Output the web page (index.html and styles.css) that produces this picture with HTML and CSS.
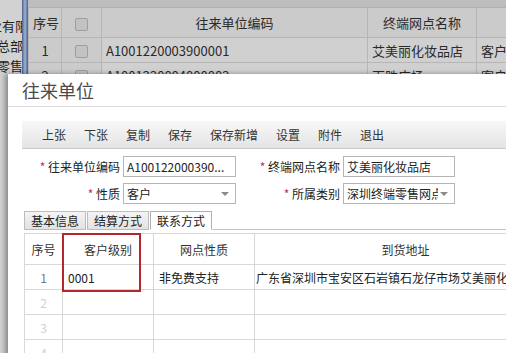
FILE: index.html
```html
<!DOCTYPE html>
<html lang="zh-CN">
<head>
  <meta charset="UTF-8">
  <title>往来单位</title>
  <link rel="stylesheet" href="styles.css">
</head>
<body>
  <div class="backpage">
    <div class="side">
      <div class="side-line"><span>深圳企业有限</span></div>
      <div class="side-line"><span>公司总部</span></div>
      <div class="side-line"><span>终端零售</span></div>
    </div>
    <div class="splitter"></div>
    <div class="list">
      <div class="list-top"></div>
      <table class="list-table">
        <tr class="list-head">
          <td class="c-no">序号</td>
          <td class="c-chk"><span class="chk"></span></td>
          <td class="c-code">往来单位编码</td>
          <td class="c-name">终端网点名称</td>
          <td class="c-type"></td>
        </tr>
        <tr>
          <td class="c-no">1</td>
          <td class="c-chk"><span class="chk"></span></td>
          <td class="left">A1001220003900001</td>
          <td class="left">艾美丽化妆品店</td>
          <td class="left">客户</td>
        </tr>
        <tr>
          <td class="c-no">2</td>
          <td class="c-chk"><span class="chk"></span></td>
          <td class="left">A1001220004000002</td>
          <td class="left">百胜广场</td>
          <td class="left">客户</td>
        </tr>
      </table>
    </div>
  </div>

  <div class="modal">
    <div class="modal-title">往来单位</div>
    <div class="modal-body">
      <div class="toolbar">
        <span class="tool">上张</span>
        <span class="tool">下张</span>
        <span class="tool">复制</span>
        <span class="tool">保存</span>
        <span class="tool">保存新增</span>
        <span class="tool">设置</span>
        <span class="tool">附件</span>
        <span class="tool">退出</span>
      </div>

      <div class="form">
        <label class="lbl"><i>*</i> 往来单位编码</label>
        <div class="field">A100122000390...</div>
        <label class="lbl"><i>*</i> 终端网点名称</label>
        <div class="field">艾美丽化妆品店</div>

        <label class="lbl"><i>*</i> 性质</label>
        <div class="field select">客户<span class="arrow"></span></div>
        <label class="lbl"><i>*</i> 所属类别</label>
        <div class="field select"><span class="clip">深圳终端零售网点</span><span class="arrow"></span></div>
      </div>

      <div class="tabs">
        <span class="tab">基本信息</span>
        <span class="tab">结算方式</span>
        <span class="tab active">联系方式</span>
        <span class="tab-rest"></span>
      </div>

      <div class="grid-wrap">
        <table class="grid">
          <tr class="grid-head">
            <td class="g-no">序号</td>
            <td class="g-level">客户级别</td>
            <td class="g-kind">网点性质</td>
            <td class="g-addr">到货地址</td>
          </tr>
          <tr>
            <td class="g-no first">1</td>
            <td>0001</td>
            <td>非免费支持</td>
            <td class="addr">广东省深圳市宝安区石岩镇石龙仔市场艾美丽化妆品店</td>
          </tr>
          <tr><td class="g-no">2</td><td></td><td></td><td></td></tr>
          <tr><td class="g-no">3</td><td></td><td></td><td></td></tr>
          <tr><td class="g-no">4</td><td></td><td></td><td></td></tr>
        </table>
        <div class="mark"></div>
      </div>
    </div>
  </div>
</body>
</html>
```

FILE: styles.css
```css
html, body {
  margin: 0;
  width: 506px;
  height: 353px;
  overflow: hidden;
}
body {
  position: relative;
  font-family: "Noto Sans CJK SC", "Liberation Sans", sans-serif;
  font-size: 12px;
  color: #333;
  background-color: #c4c4c4;
}

/* page behind the dialog, dimmed */
.backpage {
  display: flex;
  height: 353px;
  background-color: #cdcdcd;
}
.side {
  flex: 0 0 22px;
  padding-top: 16px;
  overflow: hidden;
  background-color: #d2d2d2;
}
.side-line {
  display: flex;
  justify-content: flex-end;
  height: 20px;
  font-size: 13px;
  line-height: 20px;
  color: #222;
  white-space: nowrap;
}
.side-line span {
  flex-shrink: 0;
  margin-right: -1px;
}
.side-line:first-child span {
  margin-right: -6px;
}
.splitter {
  flex: 0 0 6px;
  background: linear-gradient(to right, #4a5f85, #8fa4c8 40%, #8fa4c8 60%, #4a5f85);
}
.list {
  flex: 1;
  min-width: 0;
  overflow: hidden;
}
.list-top {
  height: 7px;
  background-color: #bdbdbd;
  border-bottom: 1px solid #b0b0b0;
}
.list-table {
  border-collapse: collapse;
  table-layout: fixed;
  width: 560px;
  font-size: 13px;
  color: #2a2a2a;
}
.list-table td {
  height: 24px;
  border: 1px solid #b6b6b6;
  border-top: none;
  padding: 0 4px;
  white-space: nowrap;
  overflow: hidden;
}
.list-table .list-head td {
  height: 29px;
  text-align: center;
  background-color: #cbcbcb;
}
.list-table td.left {
  background-color: #d0d0d0;
}
.c-no {
  width: 24px;
  text-align: center;
  background-color: #cbcbcb;
}
.c-chk {
  width: 31px;
  text-align: center;
  background-color: #cbcbcb;
}
.c-code { width: 257px; }
.c-name { width: 100px; }
.chk {
  display: inline-block;
  width: 11px;
  height: 11px;
  border: 1px solid #9e9e9e;
  border-radius: 2px;
  background-color: #c2c2c2;
  vertical-align: middle;
}

/* dialog */
.modal {
  position: absolute;
  left: 8px;
  top: 74px;
  width: 620px;
  height: 300px;
  background-color: #fff;
  box-shadow: -3px 0 5px rgba(0, 0, 0, 0.35);
  overflow: hidden;
}
.modal-title {
  height: 32px;
  padding-left: 14px;
  font-size: 18px;
  line-height: 32px;
  color: #4a4a4a;
  border-bottom: 1px solid #dcdcdc;
}
.modal-body {
  padding: 14px 0 0 14px;
}
.toolbar {
  display: flex;
  height: 27px;
  padding-left: 11px;
  background: linear-gradient(#f8f8f8, #e4e4e4);
  border-bottom: 1px solid #c8c8c8;
}
.tool {
  padding: 0 9px;
  line-height: 27px;
  font-size: 12px;
  color: #333;
}

.form {
  display: grid;
  grid-template-columns: 98px 113px 101px 112px;
  grid-auto-rows: 21px;
  column-gap: 3px;
  row-gap: 6px;
  margin-top: 7px;
}
.lbl {
  text-align: right;
  line-height: 21px;
  font-size: 12px;
  color: #222;
  white-space: nowrap;
}
.lbl i {
  font-style: normal;
  color: #c0305a;
}
.field {
  position: relative;
  box-sizing: border-box;
  border: 1px solid #b5b5b5;
  padding: 0 3px;
  line-height: 19px;
  font-size: 12px;
  color: #222;
  white-space: nowrap;
  overflow: hidden;
}
.field.select {
  padding-right: 16px;
}
.clip {
  display: block;
  overflow: hidden;
}
.arrow {
  position: absolute;
  right: 6px;
  top: 8px;
  border-left: 4px solid transparent;
  border-right: 4px solid transparent;
  border-top: 4px solid #8a8a8a;
}

.tabs {
  display: flex;
  align-items: flex-end;
  height: 19px;
  margin-top: 7px;
  margin-left: 2px;
}
.tab {
  box-sizing: border-box;
  height: 19px;
  padding: 0 6px;
  margin-right: 1px;
  line-height: 18px;
  font-size: 12px;
  color: #222;
  background: linear-gradient(#f4f4f4, #e2e2e2);
  border: 1px solid #bcbcbc;
}
.tab.active {
  background: #fff;
  border-color: #b0b0b0;
  border-bottom-color: #fff;
  margin-right: 0;
}
.tab-rest {
  flex: 1;
  border-bottom: 1px solid #c4c4c4;
}

.grid-wrap {
  position: relative;
  margin-top: 3px;
  margin-left: 2px;
}
.grid {
  border-collapse: collapse;
  table-layout: fixed;
  width: 533px;
  font-size: 12px;
  color: #222;
}
.grid td {
  height: 24px;
  border: 1px solid #d8d8d8;
  padding: 0 5px;
  white-space: nowrap;
  overflow: hidden;
}
.grid .grid-head td {
  height: 30px;
  text-align: center;
  color: #333;
}
.g-no {
  width: 27px;
  text-align: center;
  color: #d0d0d0;
}
.g-no.first { color: #777; }
.g-level { width: 80px; }
.g-kind { width: 90px; }
.grid td.addr {
  padding-left: 1px;
}
.mark {
  position: absolute;
  left: 38px;
  top: 0;
  width: 75px;
  height: 55px;
  border: 2px solid #b3282c;
}
```
